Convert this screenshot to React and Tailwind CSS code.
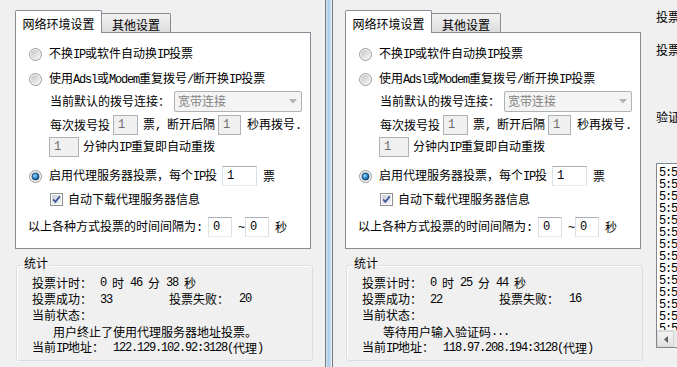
import React from "react";

const mono = "font-['Liberation_Mono',monospace] tracking-[-1.2px]";

// splits text into ascii / cjk runs so ascii gets the half-width look
function T({ s }) {
  const parts = s.split(/([\x20-\x7e]+)/).filter(Boolean);
  return (
    <>
      {parts.map((p, i) =>
        /[\x20-\x7e]/.test(p) ? (
          <span key={i} className={mono}>
            {p}
          </span>
        ) : (
          <span key={i}>{p}</span>
        )
      )}
    </>
  );
}

function Radio({ checked }) {
  return (
    <svg width="13" height="13" viewBox="0 0 13 13" className="block shrink-0">
      <defs>
        <linearGradient id="rin" x1="0" y1="0" x2="1" y2="1">
          <stop offset="0" stopColor="#c4c4c4" />
          <stop offset="1" stopColor="#f6f6f6" />
        </linearGradient>
        <radialGradient id="rdot" cx="0.4" cy="0.4" r="0.6">
          <stop offset="0" stopColor="#9ee0ff" />
          <stop offset="0.6" stopColor="#2f86c8" />
          <stop offset="1" stopColor="#0f3f70" />
        </radialGradient>
      </defs>
      <circle cx="6.5" cy="6.5" r="6" fill="#f4f4f4" stroke="#9a9b9c" />
      <circle cx="6.5" cy="6.5" r="4.5" fill="url(#rin)" />
      {checked && <circle cx="6.5" cy="6.5" r="3.5" fill="url(#rdot)" stroke="#1a4a78" strokeWidth="0.8" />}
    </svg>
  );
}

function Check() {
  return (
    <svg width="13" height="13" viewBox="0 0 13 13" className="block shrink-0">
      <defs>
        <linearGradient id="cin" x1="0" y1="0" x2="1" y2="1">
          <stop offset="0" stopColor="#cbcfd5" />
          <stop offset="1" stopColor="#f7f7f7" />
        </linearGradient>
      </defs>
      <rect x="0.5" y="0.5" width="12" height="12" fill="#fff" stroke="#8e8f8f" />
      <rect x="2" y="2" width="9" height="9" fill="url(#cin)" />
      <path d="M3.2 6.4 L5.4 8.8 L9.8 3.4" fill="none" stroke="#3d5a9c" strokeWidth="1.8" />
    </svg>
  );
}

function Box({ w, value, disabled }) {
  return (
    <div
      className={`h-[20px] ${w} shrink-0 border flex items-center pl-[4px] ${
        disabled
          ? "bg-[#f0f0f0] text-[#6d6d6d] border-[#adb2b5]"
          : "bg-white text-black border-[#abadb3] border-x-[#dbdfe6] border-b-[#e3e9ef]"
      }`}
    >
      <T s={value} />
    </div>
  );
}

function Settings() {
  return (
    <div className="flex flex-col w-[296px] shrink-0">
      {/* tab headers */}
      <div className="flex items-end h-[22px]">
        <div className="relative z-10 -mb-[1px] h-[23px] w-[87px] bg-white border border-b-0 border-[#898c95] rounded-t-[2px] flex justify-center pt-[7px]">
          <T s="网络环境设置" />
        </div>
        <div className="h-[19px] w-[69px] border-t border-r border-[#898c95] bg-gradient-to-b from-[#f3f3f3] to-[#dcdcdc] rounded-tr-[2px] flex justify-center pt-[5px]">
          <T s="其他设置" />
        </div>
      </div>

      {/* tab page */}
      <div className="h-[217px] border border-[#898c95] bg-white flex flex-col pt-[11px]">
        <div className="flex items-center h-[20px]">
          <div className="ml-[13px]">
            <Radio />
          </div>
          <span className="ml-[7px]">
            <T s="不换IP或软件自动换IP投票" />
          </span>
        </div>
        <div className="flex items-center h-[20px] mt-[5px]">
          <div className="ml-[13px]">
            <Radio />
          </div>
          <span className="ml-[7px]">
            <T s="使用Adsl或Modem重复拨号/断开换IP投票" />
          </span>
        </div>
        <div className="flex items-center h-[22px] mt-[1px]">
          <span className="ml-[34px]">
            <T s="当前默认的拨号连接：" />
          </span>
          <div className="ml-[4px] w-[128px] h-[21px] border border-[#adb2b5] rounded-[2px] bg-[#f4f4f4] flex items-center pl-[3px] text-[#838383]">
            <span className="flex-1">宽带连接</span>
            <svg width="8" height="5" viewBox="0 0 8 5" className="mr-[4px]">
              <path d="M0 0 L8 0 L4 4.5 Z" fill="#b4b4b4" />
            </svg>
          </div>
        </div>
        <div className="flex items-center h-[20px] mt-[3px]">
          <span className="ml-[34px]">每次拨号投</span>
          <div className="ml-[3px]">
            <Box w="w-[25px]" value="1" disabled />
          </div>
          <span className="ml-[5px]">
            <T s="票, 断开后隔" />
          </span>
          <div className="ml-[3px]">
            <Box w="w-[23px]" value="1" disabled />
          </div>
          <span className="ml-[6px]">
            <T s="秒再拨号." />
          </span>
        </div>
        <div className="flex items-center h-[20px] mt-[2px]">
          <div className="ml-[33px]">
            <Box w="w-[30px]" value="1" disabled />
          </div>
          <span className="ml-[4px]">
            <T s="分钟内IP重复即自动重拨" />
          </span>
        </div>
        <div className="flex items-center h-[20px] mt-[9px]">
          <div className="ml-[13px]">
            <Radio checked />
          </div>
          <span className="ml-[7px]">
            <T s="启用代理服务器投票，每个IP投" />
          </span>
          <div className="ml-[5px]">
            <Box w="w-[35px]" value="1" />
          </div>
          <span className="ml-[6px]">票</span>
        </div>
        <div className="flex items-center h-[18px] mt-[4px]">
          <div className="ml-[34px]">
            <Check />
          </div>
          <span className="ml-[5px]">自动下载代理服务器信息</span>
        </div>
        <div className="flex items-center h-[20px] mt-[9px]">
          <span className="ml-[12px]">
            <T s="以上各种方式投票的时间间隔为:" />
          </span>
          <div className="ml-[6px]">
            <Box w="w-[24px]" value="0" />
          </div>
          <span className="ml-[6px]">
            <T s="~" />
          </span>
          <div className="ml-[1px]">
            <Box w="w-[24px]" value="0" />
          </div>
          <span className="ml-[6px]">秒</span>
        </div>
      </div>
    </div>
  );
}

function Stats({ time, ok, fail, status, ip }) {
  return (
    <div className="relative mt-[16px] ml-[1px] w-[297px] h-[96px] border border-[#d5dfe5] rounded-[3px] shadow-[inset_1px_1px_0_#ffffff] pl-[15px] pt-[9px] flex flex-col">
      <span className="absolute left-[6px] -top-[9px] bg-[#f0f0f0] px-[1px]">统计</span>
      <div className="flex items-center h-[16px]">
        <span className="w-[68px]">投票计时：</span>
        <T s={time} />
      </div>
      <div className="flex items-center h-[15px]">
        <span className="w-[68px]">投票成功：</span>
        <span className="w-[69px]">
          <T s={ok} />
        </span>
        <span className="w-[70px]">投票失败：</span>
        <T s={fail} />
      </div>
      <div className="flex items-center h-[18px]">
        <span>当前状态：</span>
      </div>
      <div className="flex items-center h-[15px] pl-[21px]">
        <T s={status} />
      </div>
      <div className="flex items-center h-[18px]">
        <span className="w-[81px]">
          <T s="当前IP地址：" />
        </span>
        <T s={ip} />
      </div>
    </div>
  );
}

const logRows = Array.from({ length: 15 }, (_, i) => `5:5${i % 10}:1${i % 6}`);

export default function App() {
  return (
    <div className="w-[677px] h-[367px] overflow-hidden bg-[#f0f0f0] flex text-[12px] leading-none text-black whitespace-pre font-['Noto_Sans_CJK_SC',sans-serif]">
      {/* left window */}
      <div className="w-[326px] shrink-0 border-r border-[#7a7a7a] pl-[15px] pt-[10px] flex flex-col">
        <Settings />
        <Stats
          time="0 时 46 分 38 秒"
          ok="33"
          fail="20"
          status="用户终止了使用代理服务器地址投票。"
          ip="122.129.102.92:3128(代理)"
        />
      </div>

      {/* glass gap */}
      <div className="w-[6px] shrink-0 bg-gradient-to-r from-[#cfe3f2] via-[#a9cbe8] to-[#eaf6fc]" />

      {/* right window */}
      <div className="flex-1 min-w-0 border-l border-[#7a7a7a] pl-[12px] flex">
        <div className="pt-[10px] flex flex-col shrink-0">
          <Settings />
          <Stats
            time="0 时 25 分 44 秒"
            ok="22"
            fail="16"
            status="等待用户输入验证码..."
            ip="118.97.208.194:3128(代理)"
          />
        </div>
        <div className="w-[34px] shrink-0 overflow-hidden pl-[13px] pt-[10px] flex flex-col">
          <div className="h-[14px] flex items-center">投票</div>
          <div className="h-[14px] flex items-center mt-[19px]">投票</div>
          <div className="h-[14px] flex items-center mt-[53px]">验证</div>
          <div className="mt-[39px] w-[70px] h-[185px] border border-[#828790] bg-white flex flex-col overflow-hidden">
            <div className="flex-1 pl-[2px] pt-[3px] overflow-hidden">
              {logRows.map((r, i) => (
                <div key={i} className="h-[12px] flex items-center">
                  <T s={r} />
                </div>
              ))}
            </div>
            <div className="h-[17px] shrink-0 bg-[#e9e9e9] border-t border-[#e0e0e0] flex">
              <div className="w-[17px] h-[16px] flex items-center justify-center bg-gradient-to-b from-[#f4f4f4] to-[#e1e1e1] border border-[#d6d6d6]">
                <svg width="4" height="7" viewBox="0 0 4 7">
                  <path d="M4 0 L0 3.5 L4 7 Z" fill="#606060" />
                </svg>
              </div>
            </div>
          </div>
        </div>
      </div>
    </div>
  );
}
